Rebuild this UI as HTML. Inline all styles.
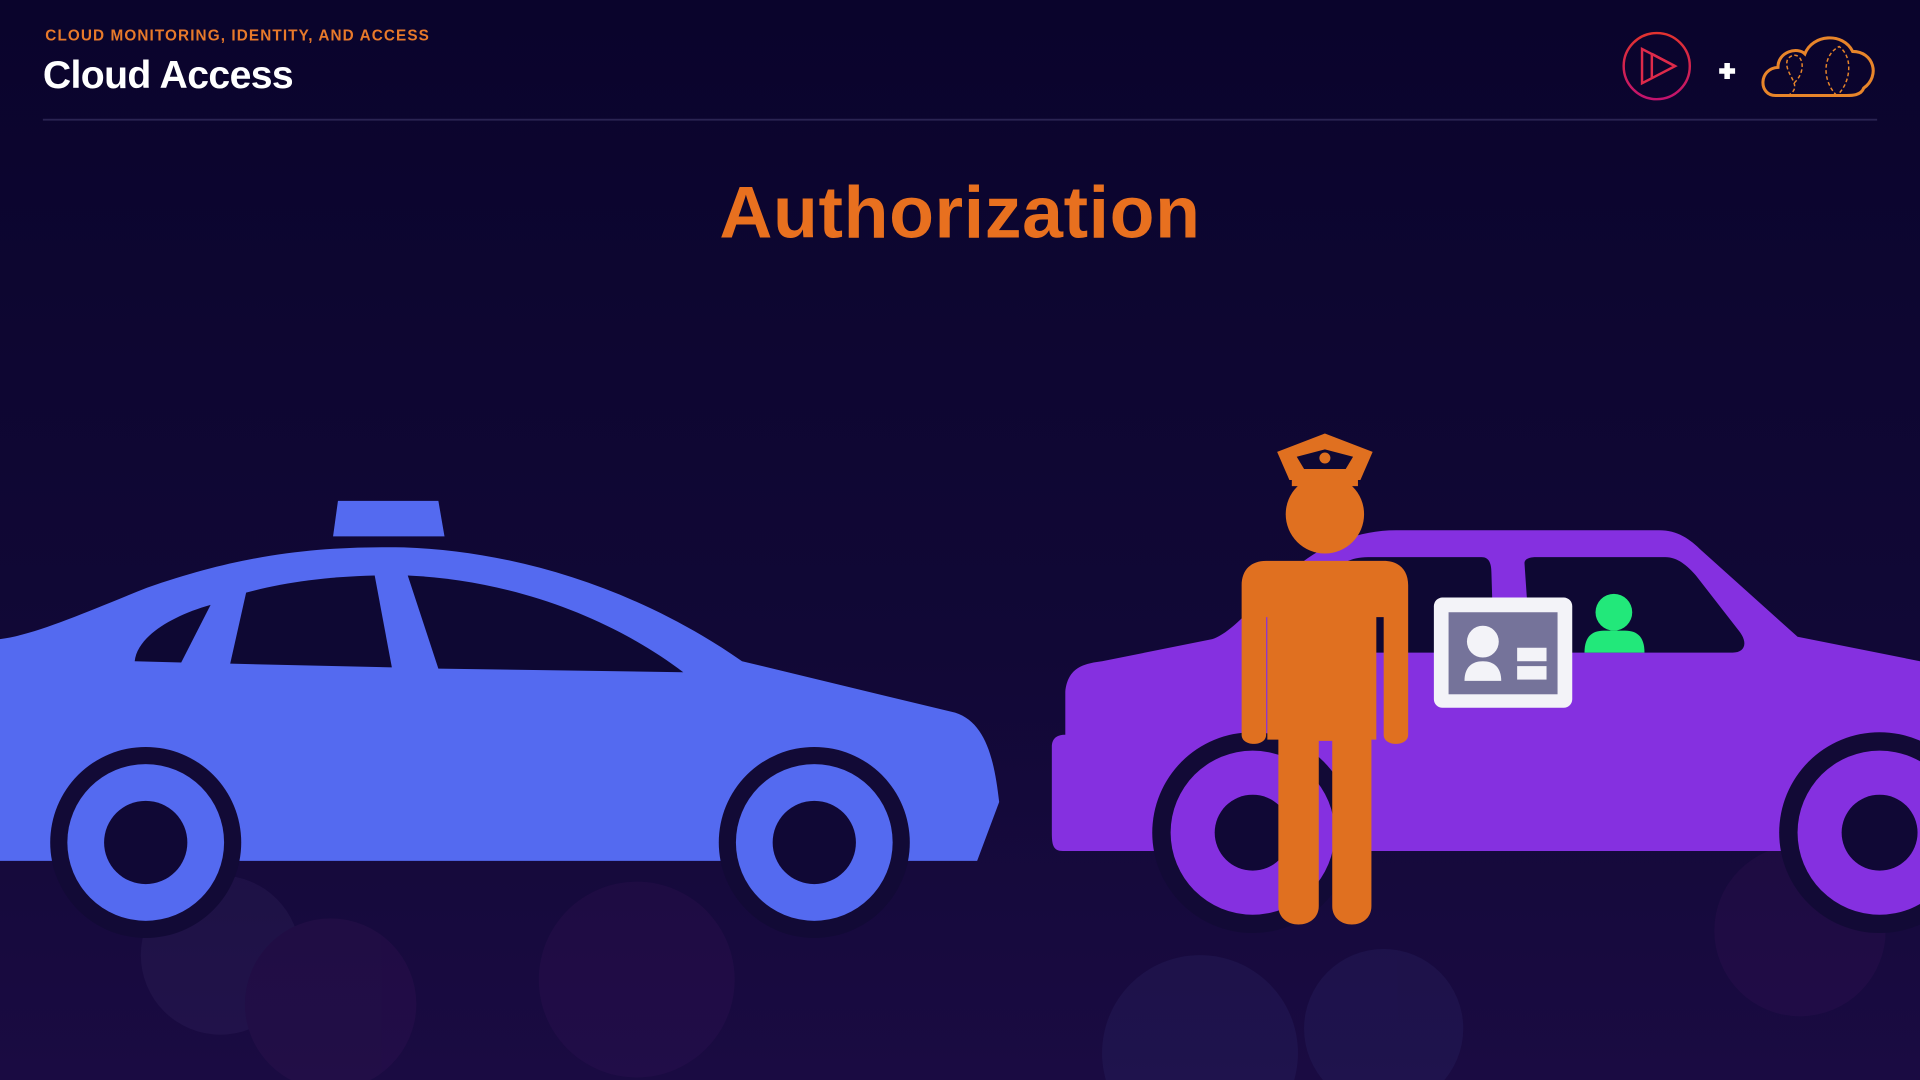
<!DOCTYPE html>
<html><head><meta charset="utf-8"><style>
html,body{margin:0;padding:0;width:1920px;height:1080px;overflow:hidden;background:#0c0630}
svg{display:block;position:absolute;left:0;top:0}
</style></head><body>
<svg width="1920" height="1080" viewBox="0 0 1568 882" xmlns="http://www.w3.org/2000/svg">
<defs>
<linearGradient id="bg" x1="0" y1="0" x2="0" y2="1">
<stop offset="0" stop-color="#0a042c"/><stop offset="0.6" stop-color="#110836"/><stop offset="1" stop-color="#1a0b42"/>
</linearGradient>
<linearGradient id="ps" x1="0" y1="0" x2="0" y2="1">
<stop offset="0" stop-color="#e2332f"/><stop offset="1" stop-color="#c2136e"/>
</linearGradient>
</defs>
<rect width="1568" height="882" fill="url(#bg)"/>
<g opacity="0.12">
<circle cx="180" cy="780" r="65" fill="#5a4a8a"/>
<circle cx="520" cy="800" r="80" fill="#5a2570"/>
<circle cx="980" cy="860" r="80" fill="#4850a0"/>
<circle cx="1130" cy="840" r="65" fill="#4850a0"/>
<circle cx="1470" cy="760" r="70" fill="#5a2570"/>
<circle cx="270" cy="820" r="70" fill="#602570"/>
</g>
<text x="37" y="33" font-family="Liberation Sans, sans-serif" font-weight="700" font-size="12.5" fill="#e8792a" letter-spacing="0.9">CLOUD MONITORING, IDENTITY, AND ACCESS</text>
<text x="35" y="72" font-family="Liberation Sans, sans-serif" font-weight="700" font-size="32" fill="#ffffff" letter-spacing="-0.5">Cloud Access</text>
<rect x="35" y="97" width="1498" height="1.5" fill="#2a2452"/>
<circle cx="1353" cy="54" r="27" fill="none" stroke="url(#ps)" stroke-width="2"/>
<path d="M1341 40 L1368 54 L1341 68 Z M1349 44 L1349 64" fill="none" stroke="#de2a4a" stroke-width="2"/>
<path d="M1349 44 L1368 54" fill="none" stroke="#de2a4a" stroke-width="2"/>
<path d="M1404 58 H1417 M1410.5 51.5 V64.5" stroke="#fff" stroke-width="4.5"/>
<path d="M1450 78 C1436 78 1436 56 1452 55 C1452 42 1468 38 1474 44 C1480 28 1505 26 1513 42 C1530 42 1536 62 1522 72 C1520 78 1512 78 1508 78 Z" fill="none" stroke="#e8852a" stroke-width="2.5"/>
<path d="M1460 78 C1475 70 1455 60 1460 48 C1470 38 1478 56 1465 68 M1500 78 C1488 66 1488 45 1502 38 C1515 48 1510 70 1500 78" fill="none" stroke="#e8852a" stroke-width="1.2" stroke-dasharray="3 2"/>
<text x="784" y="194" text-anchor="middle" font-family="Liberation Sans, sans-serif" font-weight="700" font-size="60" fill="#e8701f" letter-spacing="0.5">Authorization</text>

<!-- blue car -->
<path d="M276 409 H358 L363 438 H272 Z" fill="#546af0"/>
<path d="M0 522 C30 518 70 500 120 480 C200 452 260 446 330 447 C420 450 520 480 606 540 L780 582 C805 590 812 620 816 655 L798 703 H0 Z" fill="#546af0"/>
<path d="M110 540 C112 520 140 503 172 494 L148 541 Z" fill="#0e0833"/>
<path d="M201 484 C230 476 265 471 306 470 L320 545 L188 542 Z" fill="#0e0833"/>
<path d="M333 470 C420 474 500 505 558 549 L358 546 Z" fill="#0e0833"/>
<circle cx="119" cy="688" r="78" fill="#120a36"/>
<circle cx="119" cy="688" r="64" fill="#546af0"/>
<circle cx="119" cy="688" r="34" fill="#100835"/>
<circle cx="665" cy="688" r="78" fill="#120a36"/>
<circle cx="665" cy="688" r="64" fill="#546af0"/>
<circle cx="665" cy="688" r="34" fill="#100835"/>

<!-- purple car -->
<path d="M870 600 V565 C872 545 885 542 900 540 L990 522 C1010 515 1030 485 1060 462 C1080 445 1110 433 1140 433 H1355 C1370 433 1380 440 1390 450 L1468 520 L1568 540 V695 H868 C860 695 859 690 859 680 V610 C859 603 863 600 870 600 Z" fill="#8530e0"/>
<path d="M1090 470 C1095 458 1105 455 1120 455 H1210 C1216 455 1218 460 1218 468 L1220 533 H1100 Z" fill="#0e0833"/>
<path d="M1245 460 C1245 456 1250 455 1255 455 H1360 C1370 455 1378 462 1385 470 L1420 515 C1428 525 1425 533 1415 533 H1250 Z" fill="#0e0833"/>
<circle cx="1023" cy="680" r="82" fill="#120a36"/>
<circle cx="1023" cy="680" r="67" fill="#8530e0"/>
<circle cx="1023" cy="680" r="31" fill="#100835"/>
<circle cx="1535" cy="680" r="82" fill="#120a36"/>
<circle cx="1535" cy="680" r="67" fill="#8530e0"/>
<circle cx="1535" cy="680" r="31" fill="#100835"/>

<!-- green person -->
<circle cx="1318" cy="500" r="15" fill="#22e87a"/>
<path d="M1294 533 C1294 520 1300 515 1310 515 H1327 C1337 515 1343 520 1343 533 Z" fill="#22e87a"/>

<!-- officer -->
<path d="M1043 369 L1082 354 L1121 369 L1111 392 H1053 Z" fill="#e07020"/>
<path d="M1059 373 L1082 367 L1105 373 L1099 383 H1065 Z" fill="#0e0833"/>
<circle cx="1082" cy="374" r="4.5" fill="#e07020"/>
<rect x="1055" y="385" width="54" height="12" fill="#e07020"/>
<circle cx="1082" cy="420" r="32" fill="#e07020"/>
<path d="M1014 478 C1014 465 1022 458 1034 458 H1130 C1142 458 1150 465 1150 478 V600 C1150 610 1130 610 1130 600 V504 H1124 V604 H1120 V740 C1120 760 1088 760 1088 740 V605 H1077 V740 C1077 760 1044 760 1044 740 V604 H1035 V504 H1034 V600 C1034 610 1014 610 1014 600 Z" fill="#e07020"/>

<!-- ID card -->
<rect x="1171" y="488" width="113" height="90" rx="7" fill="#f3f3f8"/>
<rect x="1183" y="500" width="89" height="67" fill="#75739a"/>
<circle cx="1211" cy="524" r="13" fill="#f3f3f8"/>
<path d="M1196 556 C1196 545 1202 540 1211 540 C1220 540 1226 545 1226 556 Z" fill="#f3f3f8"/>
<rect x="1239" y="529" width="24" height="11" fill="#f3f3f8"/>
<rect x="1239" y="544" width="24" height="11" fill="#f3f3f8"/>
</svg>
</body></html>
